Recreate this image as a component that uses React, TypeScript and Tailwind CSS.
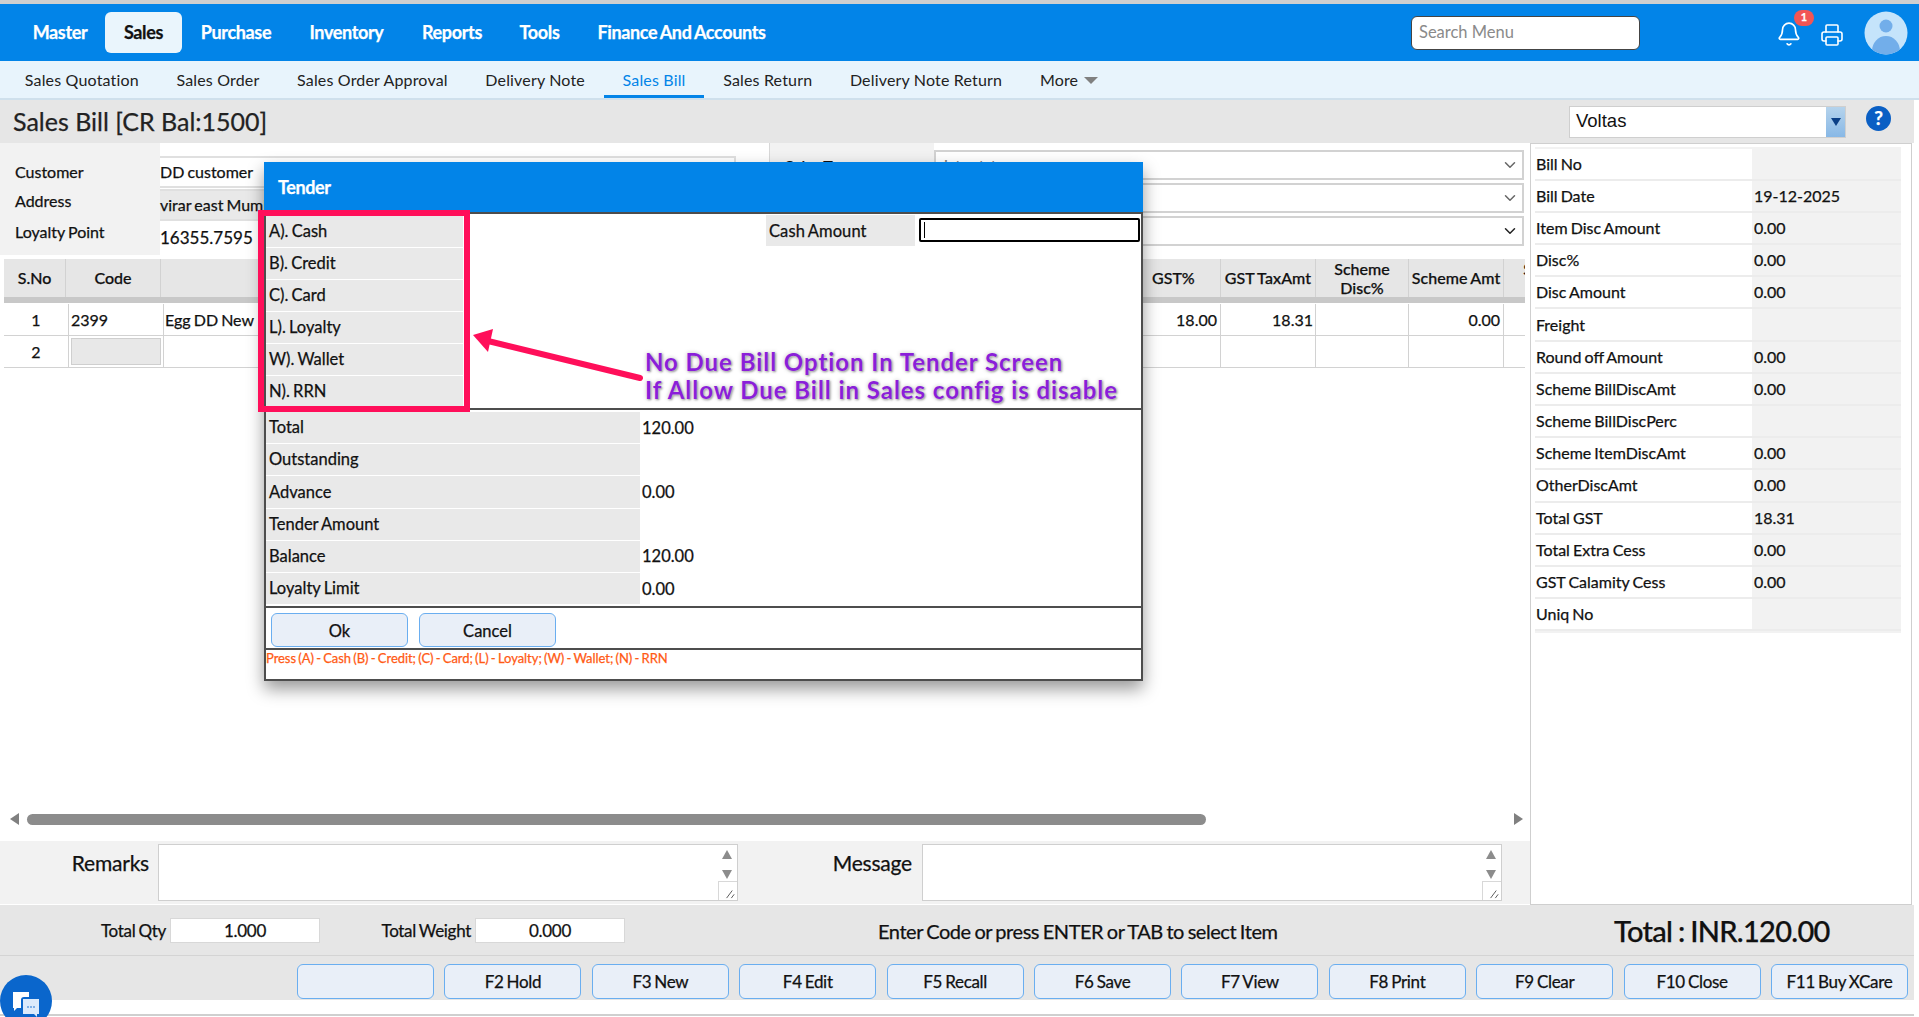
import { Bell, ChevronDown, Printer } from "lucide-react"

const navItems = [
  { label: "Master", width: "w-[90px]" },
  { label: "Sales", width: "w-[77px]", active: true },
  { label: "Purchase", width: "w-[108px]" },
  { label: "Inventory", width: "w-[113px]" },
  { label: "Reports", width: "w-[98px]" },
  { label: "Tools", width: "w-[77px]" },
  { label: "Finance And Accounts", width: "w-[207px]" },
]

const subNavItems = ["Sales Quotation", "Sales Order", "Sales Order Approval", "Delivery Note", "Sales Bill", "Sales Return", "Delivery Note Return"]

const sideRows = [
  ["Bill No", ""],
  ["Bill Date", "19-12-2025"],
  ["Item Disc Amount", "0.00"],
  ["Disc%", "0.00"],
  ["Disc Amount", "0.00"],
  ["Freight", ""],
  ["Round off Amount", "0.00"],
  ["Scheme BillDiscAmt", "0.00"],
  ["Scheme BillDiscPerc", ""],
  ["Scheme ItemDiscAmt", "0.00"],
  ["OtherDiscAmt", "0.00"],
  ["Total GST", "18.31"],
  ["Total Extra Cess", "0.00"],
  ["GST Calamity Cess", "0.00"],
  ["Uniq No", ""],
]

const tenderOptions = ["A). Cash", "B). Credit", "C). Card", "L). Loyalty", "W). Wallet", "N). RRN"]

const tenderTotals = [
  ["Total", "120.00"],
  ["Outstanding", ""],
  ["Advance", "0.00"],
  ["Tender Amount", ""],
  ["Balance", "120.00"],
  ["Loyalty Limit", "0.00"],
]

const footerButtons = ["", "F2 Hold", "F3 New", "F4 Edit", "F5 Recall", "F6 Save", "F7 View", "F8 Print", "F9 Clear", "F10 Close", "F11 Buy XCare"]

function RemarkBox({ width }: { width: string }) {
  return (
    <div className={`relative h-[57px] bg-white border border-[#cfcfcf] ${width}`}>
      <div className="absolute right-[5px] top-[5px] w-0 h-0 border-x-[5px] border-x-transparent border-b-[9px] border-b-[#8c8c8c]" />
      <div className="absolute right-[5px] top-[25px] w-0 h-0 border-x-[5px] border-x-transparent border-t-[9px] border-t-[#8c8c8c]" />
      <div className="absolute right-0 bottom-0 w-[19px] h-[19px] border-l border-t border-[#d8d8d8]">
        <svg viewBox="0 0 19 19" className="w-full h-full">
          <path d="M8 17 L14 9 M13 17 L16 13" stroke="#555" strokeWidth="1" fill="none" />
        </svg>
      </div>
    </div>
  )
}

function TopSelect({ value, dark }: { value?: string; dark?: boolean }) {
  return (
    <div className="flex items-center justify-between w-[590px] h-[30px] bg-white border-2 border-[#d2d2d2] pl-[8px] pr-[3px]">
      <span className="text-[14px] text-[#777] -mt-[2px]">{value}</span>
      <ChevronDown className={`w-[18px] h-[18px] ${dark ? "text-[#222]" : "text-[#666]"}`} strokeWidth={2} />
    </div>
  )
}

export default function App() {
  return (
    <div className="relative w-[1919px] h-[1017px] overflow-hidden bg-white text-[#111] [font-family:Lato,sans-serif] [word-spacing:-1px] [-webkit-text-stroke:0.25px]">
      <div className="h-[4px] bg-[#cfcfcf]" />

      {/* main nav */}
      <div className="flex items-center justify-between h-[57px] bg-[#0284e8] pl-[15px]">
        <div className="flex items-center">
          {navItems.map((item) => (
            <div
              key={item.label}
              className={`flex items-center justify-center h-[41px] text-[18px] font-bold tracking-[-0.35px] rounded-[6px] ${item.width} ${item.active ? "bg-[#eaf5fc] text-[#111]" : "text-white"}`}
            >
              {item.label}
            </div>
          ))}
        </div>
        <div className="flex items-center">
          <div className="flex items-center w-[229px] h-[34px] bg-white border border-[#444] rounded-[6px] pl-[7px] text-[16.5px] text-[#8a8a8a] [-webkit-text-stroke:0px] [word-spacing:0px]">
            Search Menu
          </div>
          <div className="relative ml-[136px] mr-[18px]">
            <Bell className="w-[26px] h-[26px] text-white mt-[2px]" strokeWidth={1.5} />
            <span className="absolute -top-[9px] left-[18px] flex items-center justify-center w-[20px] h-[16px] rounded-full bg-[#f25555] text-white text-[11px] font-bold">1</span>
          </div>
          <Printer className="w-[24px] h-[24px] text-white mt-[4px]" strokeWidth={1.6} />
          <svg viewBox="0 0 44 44" className="w-[44px] h-[44px] ml-[20px] mr-[11px]">
            <clipPath id="avatar"><circle cx="22" cy="22" r="21.5" /></clipPath>
            <circle cx="22" cy="22" r="21.5" fill="#c5e4fb" />
            <circle cx="22" cy="15" r="6.5" fill="#72aeea" />
            <ellipse cx="22" cy="40" rx="14" ry="15" fill="#72aeea" clipPath="url(#avatar)" />
          </svg>
        </div>
      </div>

      {/* sub nav */}
      <div className="flex items-stretch h-[37px] bg-[#e8f4fc] pl-[6px] text-[16px] text-[#222] tracking-[0.17px] [word-spacing:0px] [-webkit-text-stroke:0px]">
        {subNavItems.map((item) => (
          <div
            key={item}
            className={`flex items-center px-[18.8px] ${item === "Sales Bill" ? "text-[#0284e8] border-b-[3px] border-[#0284e8] pt-[3px]" : ""}`}
          >
            {item}
          </div>
        ))}
        <div className="flex items-center px-[19px]">
          More
          <span className="ml-[6px] mt-[2px] w-0 h-0 border-x-[7px] border-x-transparent border-t-[7px] border-t-[#808080]" />
        </div>
      </div>
      <div className="h-[2px] bg-[#cfe0ec]" />

      {/* title bar */}
      <div className="flex items-center justify-between w-[1914px] h-[43px] bg-[#e6e6e6] pl-[13px]">
        <div className="text-[25px] text-[#222] [word-spacing:0px]">Sales Bill [CR Bal:1500]</div>
        <div className="flex items-center">
          <div className="flex items-center justify-between w-[277px] h-[32px] bg-white border border-[#cfcfcf] pl-[6px]">
            <span className="text-[18.5px] -mt-[2px] [font-family:'Liberation_Sans',sans-serif] [-webkit-text-stroke:0px]">Voltas</span>
            <div className="flex items-center justify-center w-[19px] h-full bg-gradient-to-b from-[#b5d3ec] to-[#88b8e6]">
              <span className="w-0 h-0 border-x-[5px] border-x-transparent border-t-[8px] border-t-[#0b3f86]" />
            </div>
          </div>
          <div className="flex items-center justify-center w-[25px] h-[25px] ml-[20px] mr-[23px] mb-[6px] rounded-full bg-[#0a5fc4] text-white text-[19px] font-bold">?</div>
        </div>
      </div>

      {/* body */}
      <div className="flex w-[1914px] h-[762px]">
        <div className="flex flex-col w-[1530px]">
          <div className="flex h-[116px]">
            <div className="flex flex-col w-[160px] h-[112px] bg-[#f2f2f2] pl-[15px] pt-[17px] text-[16px]">
              <div className="h-[29px]">Customer</div>
              <div className="h-[31px]">Address</div>
              <div>Loyalty Point</div>
            </div>
            <div className="flex flex-col w-[576px] pt-[13px] text-[16px]">
              <div className="flex items-center h-[32px] bg-white border-2 border-l-0 border-[#e0e0e0]">DD customer</div>
              <div className="flex items-center h-[32px] mt-[1px] bg-[#e9e9e9] border-2 border-l-0 border-[#e0e0e0]">virar east Mumbai</div>
              <div className="flex items-center h-[32px] text-[17px] pt-[1px]">16355.7595</div>
            </div>
            <div className="w-[33px]" />
            <div className="w-[165px] h-[112px] border-l border-[#d8d8d8] bg-[#f2f2f2] pl-[15px] pt-[11px] text-[16px]">Sales Type</div>
            <div className="flex flex-col gap-[3px] pt-[7px]">
              <TopSelect value="Interstate" />
              <TopSelect />
              <TopSelect dark />
            </div>
          </div>

          {/* item table */}
          <div className="w-[1521px] ml-[4px] overflow-hidden text-[16px]">
            <div className="flex w-[1600px] h-[38px] bg-[#e6e6e6] font-medium">
              <div className="flex items-center justify-center w-[62px] border-r border-[#d2d2d2]">S.No</div>
              <div className="flex items-center justify-center w-[95px] border-r border-[#d2d2d2]">Code</div>
              <div className="w-[966px] border-r border-[#d2d2d2]" />
              <div className="flex items-center pl-[25px] w-[94px] border-r border-[#d2d2d2]">GST%</div>
              <div className="flex items-center justify-center w-[95px] border-r border-[#d2d2d2] tracking-[0.1px]">GST TaxAmt</div>
              <div className="flex items-center justify-center text-center w-[93px] border-r border-[#d2d2d2] leading-[19px]">Scheme Disc%</div>
              <div className="flex items-center justify-center w-[95px] border-r border-[#d2d2d2] tracking-[0.1px]">Scheme Amt</div>
              <div className="flex items-center justify-center text-center w-[94px] leading-[19px]">Scheme Charge</div>
            </div>
            <div className="w-full h-[6px] bg-[#c8c8c8]" />
            <div className="flex w-[1600px] h-[33px] border-b border-[#d2d2d2] items-center pt-[1px]">
              <div className="flex items-center justify-center w-[65px] h-full border-r border-[#d2d2d2]">1</div>
              <div className="flex items-center w-[95px] h-full pl-[2px] border-r border-[#d2d2d2]">2399</div>
              <div className="flex items-center w-[963px] h-full pl-[1px] border-r border-[#d2d2d2]">Egg DD New</div>
              <div className="flex items-center justify-end w-[94px] h-full pr-[3px] border-r border-[#d2d2d2]">18.00</div>
              <div className="flex items-center justify-end w-[95px] h-full pr-[2px] border-r border-[#d2d2d2]">18.31</div>
              <div className="w-[93px] h-full border-r border-[#d2d2d2]" />
              <div className="flex items-center justify-end w-[95px] h-full pr-[3px] border-r border-[#d2d2d2]">0.00</div>
            </div>
            <div className="flex w-[1600px] h-[32px] border-b border-[#d2d2d2] items-center">
              <div className="flex items-center justify-center w-[65px] h-full border-r border-[#d2d2d2]">2</div>
              <div className="flex items-center w-[95px] h-full border-r border-[#d2d2d2] px-[2px] py-[2px]">
                <div className="w-full h-full bg-[#e8e8e8] border border-[#cfcfcf]" />
              </div>
              <div className="w-[963px] h-full border-r border-[#d2d2d2]" />
              <div className="w-[94px] h-full border-r border-[#d2d2d2]" />
              <div className="w-[95px] h-full border-r border-[#d2d2d2]" />
              <div className="w-[93px] h-full border-r border-[#d2d2d2]" />
              <div className="w-[95px] h-full border-r border-[#d2d2d2]" />
            </div>
          </div>

          {/* horizontal scroll */}
          <div className="flex items-center h-[16px] mt-[443px] pl-[10px]">
            <span className="w-0 h-0 border-y-[6px] border-y-transparent border-r-[9px] border-r-[#808080]" />
            <div className="w-[1179px] h-[11px] ml-[8px] rounded-full bg-[#8c8c8c]" />
            <div className="flex-1 h-[11px]" />
            <span className="w-0 h-0 mr-[7px] border-y-[6px] border-y-transparent border-l-[9px] border-l-[#808080]" />
          </div>

          {/* remarks */}
          <div className="flex h-[63px] mt-[14px] bg-[#f2f2f2] pt-[3px] text-[21px] tracking-[-0.2px]">
            <div className="w-[149px] pt-[3px] text-right">Remarks</div>
            <div className="w-[9px]" />
            <RemarkBox width="w-[580px]" />
            <div className="w-[174px] pt-[3px] text-right">Message</div>
            <div className="w-[10px]" />
            <RemarkBox width="w-[580px]" />
          </div>
        </div>

        {/* totals side panel */}
        <div className="w-[382px] border-x border-b border-t border-[#cfcfcf] pl-[4px] pt-[3px] text-[16px]">
          <div className="w-[366px] bg-[#f2f2f2] py-[1.5px]">
            {sideRows.map(([label, value]) => (
              <div key={label} className="flex h-[32.2px] border-b-2 border-[#ececec]">
                <div className="flex items-center w-[217px] bg-white pl-[1px]">{label}</div>
                <div className="flex items-center pl-[2px]">{value}</div>
              </div>
            ))}
          </div>
        </div>
      </div>

      {/* totals strip */}
      <div className="flex items-center w-[1914px] h-[51px] bg-[#e6e6e6] border-b border-[#d4d4d4] text-[17px] tracking-[-0.3px] pt-[1px]">
        <div className="w-[166px] text-right">Total Qty</div>
        <div className="flex items-center justify-center w-[150px] h-[25px] ml-[4px] bg-white border border-[#d8d8d8]">1.000</div>
        <div className="w-[151px] text-right">Total Weight</div>
        <div className="flex items-center justify-center w-[150px] h-[25px] ml-[4px] bg-white border border-[#d8d8d8]">0.000</div>
        <div className="w-[989px] pl-[253px] text-[20px] tracking-[-0.45px]">Enter Code or press ENTER or TAB to select Item</div>
        <div className="text-[29px] tracking-[-0.7px] font-medium whitespace-nowrap">Total : INR.120.00</div>
      </div>

      {/* function keys */}
      <div className="flex items-center justify-end gap-[10.4px] w-[1914px] h-[44px] bg-[#e6e6e6] pr-[6px] pt-[7px]">
        {footerButtons.map((label, i) => (
          <div key={i} className="flex items-center justify-center w-[137px] h-[35px] bg-[#e9eff8] border border-[#6aaef0] rounded-[6px] text-[17px] tracking-[-0.3px]">
            {label}
          </div>
        ))}
      </div>
      <div className="w-[1914px] h-[14px] bg-white" />
      <div className="w-[1914px] h-[2px] bg-[#cfcfcf]" />

      {/* chat bubble */}
      <div className="absolute left-0 top-[975px] flex items-center justify-center w-[52px] h-[52px] rounded-full bg-[#0a66cc]">
        <svg viewBox="0 0 30 30" className="w-[30px] h-[30px] mt-[6px]">
          <path d="M2 3 H18 V8 H13 Q10 8 10 11 V19 H6 L3 22 V19 H2 Z" fill="#fff" />
          <path d="M12 10 H28 V25 H26 V28 L23 25 H12 Z" fill="#dbeafb" />
          <circle cx="17" cy="18" r="0.8" fill="#0a66cc" />
          <circle cx="20" cy="18" r="0.8" fill="#0a66cc" />
          <circle cx="23" cy="18" r="0.8" fill="#0a66cc" />
        </svg>
      </div>

      {/* tender dialog */}
      <div className="absolute left-[264px] top-[162px] flex flex-col w-[879px] h-[519px] bg-white border-x-2 border-b-2 border-[#4d4d4d] shadow-[0_8px_16px_rgba(0,0,0,0.4)] text-[16.5px]">
        <div className="flex items-center h-[50px] -mx-[2px] pl-[14px] bg-[#0284e8] text-white text-[18px] font-bold tracking-[-0.4px] shrink-0">Tender</div>
        <div className="flex justify-between h-[196px] border-t-2 border-[#4d4d4d] shrink-0">
          <div className="flex flex-col w-[197px] pt-[2px]">
            {tenderOptions.map((option) => (
              <div key={option} className="flex items-center h-[32.2px] pl-[3px] bg-[#e9e9e9] border-b-[1px] border-white">{option}</div>
            ))}
          </div>
          <div className="flex items-start pt-[1px]">
            <div className="flex items-center w-[149px] h-[31px] pl-[3px] pt-[1px] bg-[#e9e9e9] tracking-[0.1px]">Cash Amount</div>
            <div className="w-[221px] h-[24px] ml-[4px] mr-[1px] mt-[3px] bg-white border-2 border-black rounded-[2px]">
              <div className="w-[1px] h-[16px] ml-[3px] mt-[2px] bg-black" />
            </div>
          </div>
        </div>
        <div className="flex flex-col h-[198px] border-t-2 border-[#4d4d4d] pt-[2px] shrink-0">
          {tenderTotals.map(([label, value]) => (
            <div key={label} className="flex h-[32.2px]">
              <div className="flex items-center w-[374px] pl-[3px] bg-[#e9e9e9] border-b-[1px] border-white">{label}</div>
              <div className="flex items-center pl-[2px]">{value}</div>
            </div>
          ))}
        </div>
        <div className="flex items-start gap-[11px] h-[44px] pl-[5px] pt-[5px] border-y-2 border-[#4d4d4d] shrink-0">
          {["Ok", "Cancel"].map((label) => (
            <div key={label} className="flex items-center justify-center w-[137px] h-[34px] pt-[2px] bg-[#e9eff8] border border-[#6aaef0] rounded-[6px]">{label}</div>
          ))}
        </div>
        <div className="text-[13px] text-[#ff5a14] tracking-[-0.05px] leading-[16px]">Press (A) - Cash (B) - Credit; (C) - Card; (L) - Loyalty; (W) - Wallet; (N) - RRN</div>

        {/* annotation */}
        <div className="absolute -left-[8px] top-[48px] w-[212px] h-[202px] border-[6px] border-[#ff0f5a]" />
        <svg viewBox="0 0 180 60" className="absolute left-[204px] top-[163px] w-[180px] h-[60px]">
          <path d="M170 53 L14 15" stroke="#ff0f5a" strokeWidth="6" strokeLinecap="round" fill="none" />
          <path d="M3 10 L23 4 L18 27 Z" fill="#ff0f5a" />
        </svg>
        <div className="absolute left-[379px] top-[186px] text-[24px] leading-[28px] font-bold text-[#8a1fd8] tracking-[0.95px] whitespace-nowrap [word-spacing:0px] [-webkit-text-stroke:0px] [text-shadow:0_0_2px_#fff,1px_1px_2px_#888,0_0_4px_#bbb]">
          <div>No Due Bill Option In Tender Screen</div>
          <div>If Allow Due Bill in Sales config is disable</div>
        </div>
      </div>
    </div>
  )
}
